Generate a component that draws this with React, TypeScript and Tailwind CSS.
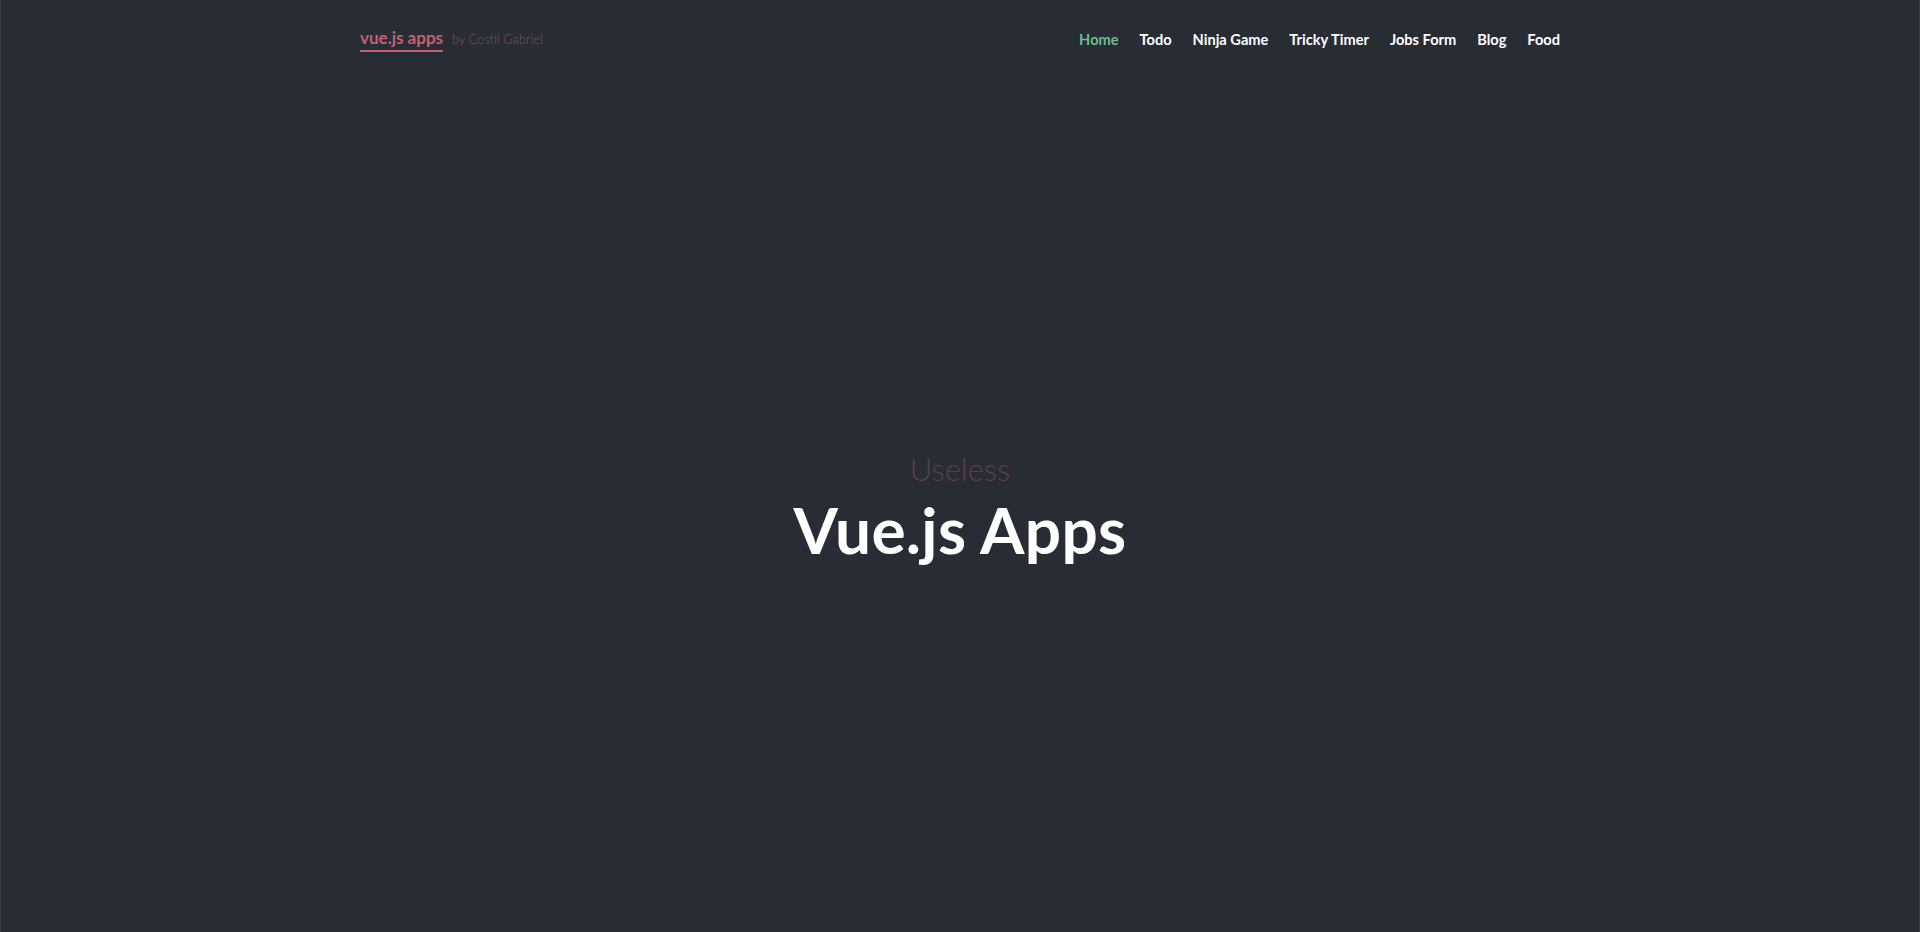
export default function App() {
  const links = ["Home", "Todo", "Ninja Game", "Tricky Timer", "Jobs Form", "Blog", "Food"];
  return (
    <div className="min-h-[932px] h-[932px] bg-[#282c35] flex flex-col border-x border-[#3a3e48]" style={{ fontFamily: "Lato, 'Noto Sans', sans-serif" }}>
      <header className="w-[1200px] mx-auto flex items-center justify-between h-[78px]">
        <div className="flex items-baseline gap-[9px] mt-[1px]">
          <span className="text-[17px] font-bold text-[#c4636c] border-b-2 border-[#c4636c] leading-[22px] pb-[1px]">vue.js apps</span>
          <span className="text-[12.8px] font-light text-[#7a525b]">by Costil Gabriel</span>
        </div>
        <nav className="flex items-center gap-[21px] mt-[1px]">
          {links.map((l, i) => (
            <a key={l} className={`text-[14.6px] font-bold ${i === 0 ? "text-[#6cbd8f]" : "text-white"}`}>{l}</a>
          ))}
        </nav>
      </header>
      <main className="flex-1 flex flex-col items-center justify-center mt-[9px]">
        <div className="text-[31px] font-light text-[#5c3f48] leading-[36px]">Useless</div>
        <h1 className="text-[64px] font-bold text-white leading-[76px] mt-[5px] tracking-[0.3px]">Vue.js Apps</h1>
      </main>
    </div>
  );
}
